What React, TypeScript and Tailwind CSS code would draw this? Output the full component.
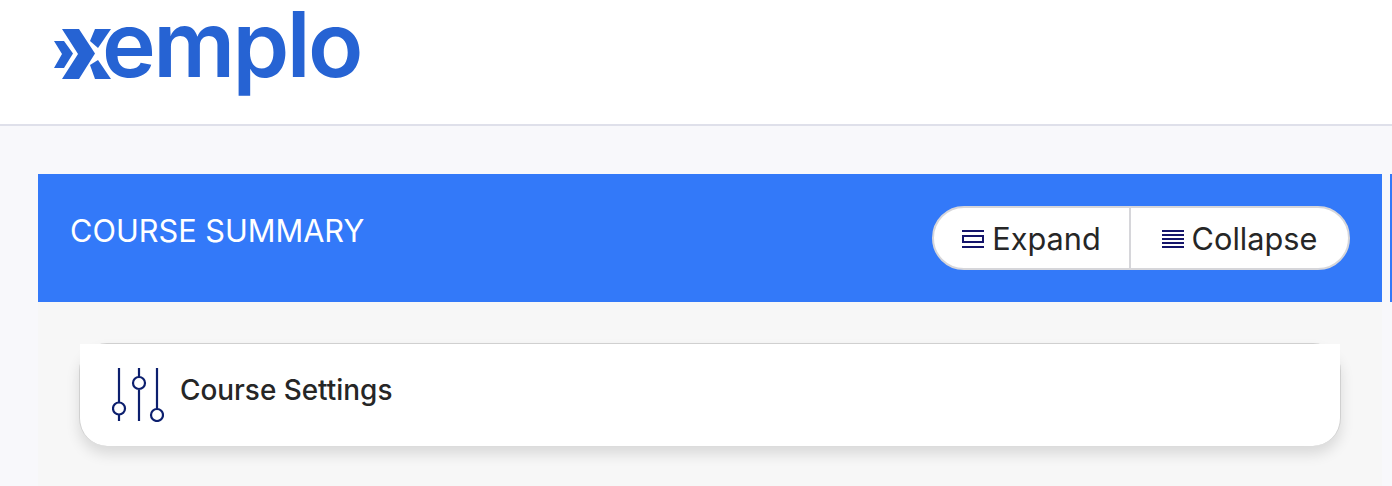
export default function App() {
  return (
    <div className="min-h-[486px] bg-[#f8f8fb] overflow-hidden font-['Inter',sans-serif] text-[#262626]">
      <header className="h-[126px] bg-white border-b-2 border-[#dfe0ea] pl-[54px] pt-[4px] flex items-start">
        <div className="flex items-start text-[#2663d3]">
          <svg width="57" height="50" viewBox="54 29 57 50" className="mt-[25px] shrink-0" fill="currentColor">
            <polygon points="54,41 64,41 73,53.5 64,68 54,68 62,54" />
            <polygon points="62,29 79,29 95,53.5 79,79 62,79 78,54" />
            <polygon points="95,29 111,29 98,48 90,41" />
            <polygon points="90,65 98,60 111,79 95,79" />
          </svg>
          <span className="text-[91px] leading-[80px] font-semibold tracking-[-2.6px] -ml-[9px]">emplo</span>
        </div>
      </header>
      <main className="pt-[48px] flex gap-2 pl-[38px]">
        <section className="w-[1344px] shrink-0 bg-[#f7f7f7] h-[312px]">
          <div className="h-[128px] bg-[#3379f9] pl-[32px] pr-[32px] flex justify-between items-start">
            <h2 className="text-[30.7px] leading-[36px] text-white mt-[39px]">COURSE SUMMARY</h2>
            <div className="mt-[32px] h-[64px] flex rounded-full bg-white border-2 border-[#d6d6da] text-[30.7px]">
              <button className="w-[197px] pt-[2px] flex items-center justify-center gap-2 border-r-2 border-[#d6d6da]">
                <svg width="22" height="18" viewBox="0 0 22 18" stroke="#15156b" strokeWidth="2" fill="none">
                  <path d="M0 1h22M1 6h20v6H1zM0 17h22" />
                </svg>
                Expand
              </button>
              <button className="w-[217px] pt-[2px] flex items-center justify-center gap-2">
                <svg width="22" height="18" viewBox="0 0 22 18" stroke="#15156b" strokeWidth="2" fill="none">
                  <path d="M0 1h22M0 5h22M0 9h22M0 13h22M0 17h22" />
                </svg>
                Collapse
              </button>
            </div>
          </div>
          <div className="mt-[41px] mx-[41px] h-[103px] rounded-[28px] border-x border-t border-[#d0d0d0] shadow-[0_8px_14px_rgba(0,0,0,0.12)] bg-white">
            <div className="h-[60px] bg-white flex items-start pl-[32px] pt-[24px] gap-[16px] text-[27.9px] font-medium">
              <svg width="52" height="54" viewBox="0 0 52 54" stroke="#0c1f6e" strokeWidth="2.2" fill="none" className="shrink-0">
                <path d="M7 0v34M7 47v6M27 0v9M27 22v31M45 0v41" />
                <circle cx="7" cy="40.500" r="6" />
                <circle cx="27" cy="15" r="6" />
                <circle cx="45" cy="47" r="6" />
              </svg>
              <span className="mt-[5px] leading-[34px]">Course Settings</span>
            </div>
          </div>
        </section>
        <div className="w-[10px] h-[128px] bg-[#3379f9] shrink-0" />
      </main>
    </div>
  );
}
